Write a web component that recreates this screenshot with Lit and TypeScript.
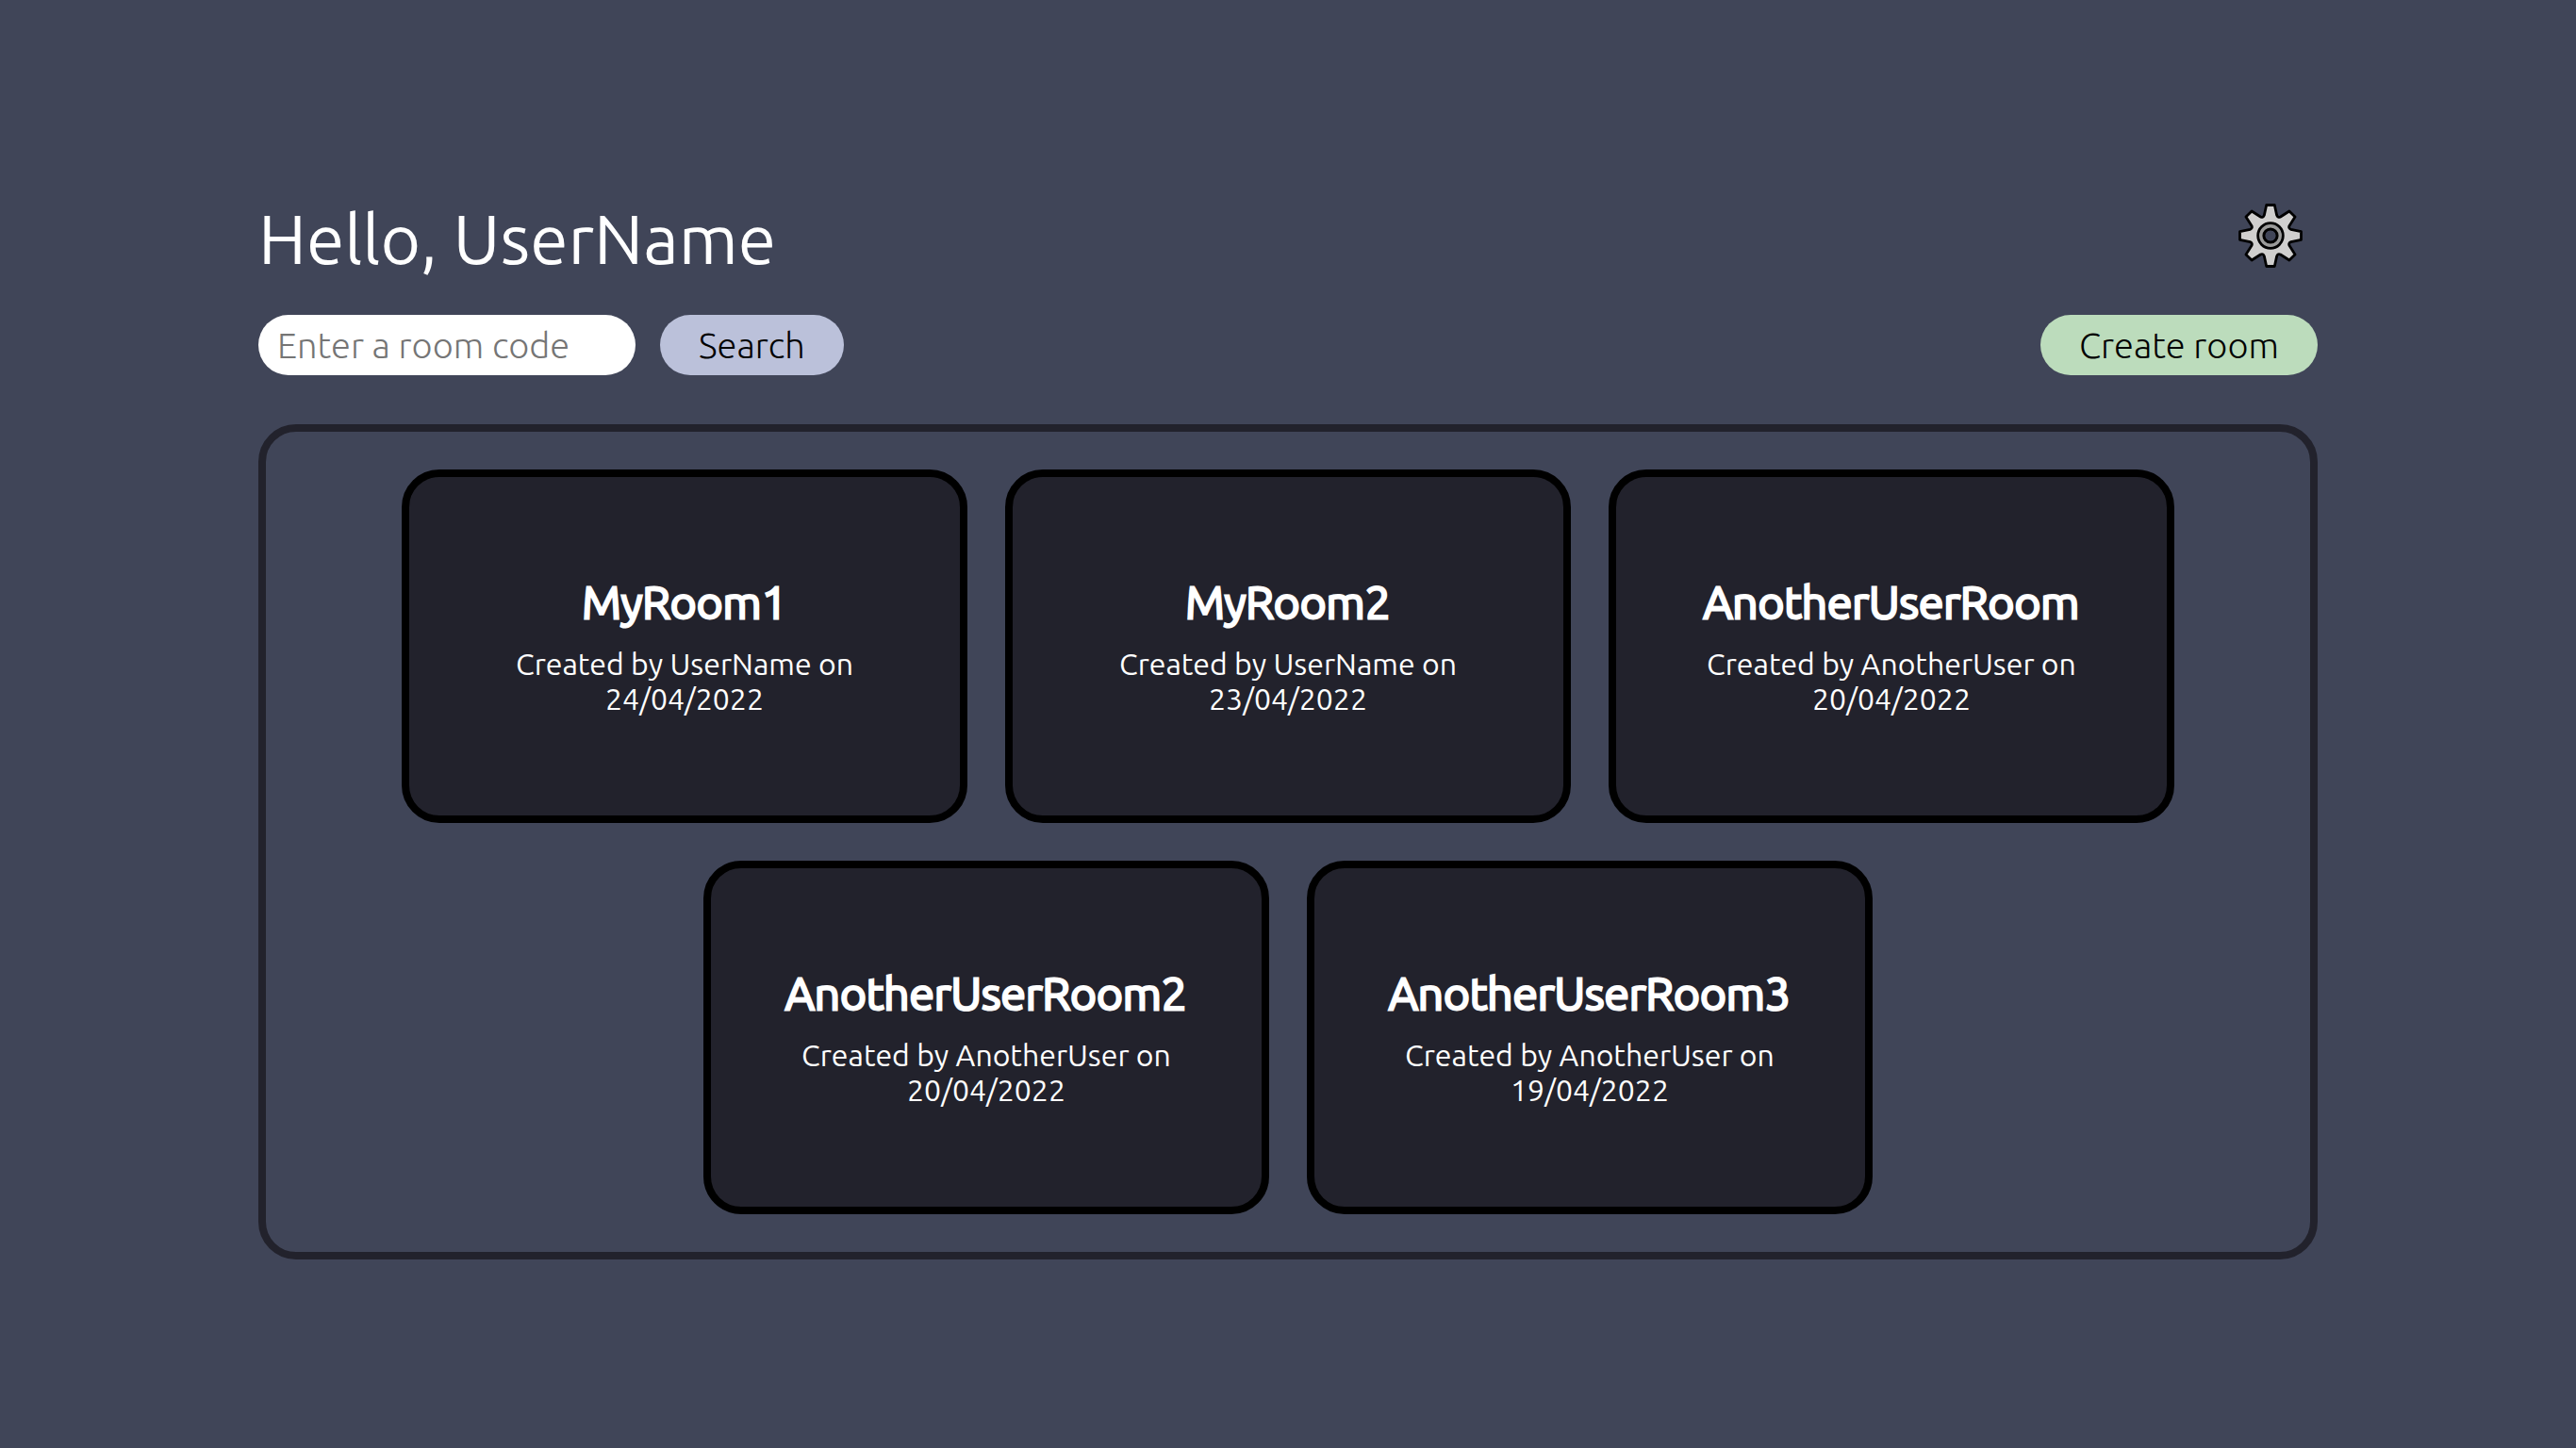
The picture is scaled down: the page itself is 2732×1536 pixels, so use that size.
import { LitElement, html, css, svg } from "lit";
import { customElement, property, state } from "lit/decorators.js";

interface Room {
  name: string;
  owner: string;
  date: string;
}

/** Outline of an eight-toothed gear centred on (36, 36) in a 72-unit box. */
function gearOutline(): string {
  const place = (x: number, y: number, turn: number) => {
    const a = (turn * Math.PI) / 180;
    const px = 36 + x * Math.cos(a) - y * Math.sin(a);
    const py = 36 + x * Math.sin(a) + y * Math.cos(a);
    return `${px.toFixed(2)} ${py.toFixed(2)}`;
  };
  let d = "";
  for (let i = 0; i < 8; i++) {
    const t = i * 45;
    d += i === 0 ? `M${place(-4.8, -15.6, t)}` : "";
    d += `L${place(-3.1, -23.4, t)}L${place(3.1, -23.4, t)}L${place(4.8, -15.6, t)}`;
    d += `Q${place(0, -14.6, t + 22.5)} ${place(-4.8, -15.6, t + 45)}`;
  }
  return d + "Z";
}

@customElement("gear-icon")
export class GearIcon extends LitElement {
  static styles = css`
    :host {
      display: block;
    }
    .gear {
      display: block;
      width: 100%;
      height: 100%;
    }
  `;

  render() {
    return svg`
      <svg class="gear" viewBox="0 0 72 72" aria-hidden="true" stroke-width="2" stroke-linejoin="round">
        <path d="${gearOutline()}M41.2 36A5.2 5.2 0 1 0 30.8 36A5.2 5.2 0 1 0 41.2 36Z"
          fill="#d0cfce" fill-rule="evenodd" stroke="#000" />
        <circle cx="36" cy="36" r="7.4" fill="none" stroke="#9b9b9a" stroke-width="4.4" />
        <circle cx="36" cy="36" r="9.6" fill="none" stroke="#000" />
        <circle cx="36" cy="36" r="5.2" fill="none" stroke="#000" />
      </svg>`;
  }
}

@customElement("room-card")
export class RoomCard extends LitElement {
  @property({ attribute: false }) room!: Room;

  static styles = css`
    :host {
      display: block;
      width: 600px;
      max-width: 100%;
    }
    .card {
      box-sizing: border-box;
      display: flex;
      flex-direction: column;
      align-items: center;
      justify-content: center;
      gap: 20px;
      width: 100%;
      aspect-ratio: 8 / 5;
      padding: 16px 60px;
      border: 8px solid #000;
      border-radius: 40px;
      background: #22222c;
      color: #fff;
      text-align: center;
      text-decoration: none;
    }
    .name {
      margin: 0;
      font-size: 48px;
      font-weight: 300;
      line-height: 55px;
      -webkit-text-stroke: 3px currentColor;
    }
    .details {
      margin: 0;
      font-size: 32px;
      font-weight: 400;
      line-height: 37px;
    }
  `;

  render() {
    const { name, owner, date } = this.room;
    return html`
      <a class="card" href="#${name}">
        <h2 class="name">${name}</h2>
        <p class="details">Created by ${owner} on ${date}</p>
      </a>
    `;
  }
}

@customElement("app-root")
export class AppRoot extends LitElement {
  @state() private user = "UserName";

  @state() private rooms: Room[] = [
    { name: "MyRoom1", owner: "UserName", date: "24/04/2022" },
    { name: "MyRoom2", owner: "UserName", date: "23/04/2022" },
    { name: "AnotherUserRoom", owner: "AnotherUser", date: "20/04/2022" },
    { name: "AnotherUserRoom2", owner: "AnotherUser", date: "20/04/2022" },
    { name: "AnotherUserRoom3", owner: "AnotherUser", date: "19/04/2022" },
  ];

  static styles = css`
    :host {
      display: block;
      font-family: Ubuntu, "Open Sans", "Noto Sans", sans-serif;
      font-weight: 300;
      color: #fff;
    }
    .page {
      box-sizing: border-box;
      display: flex;
      flex-direction: column;
      justify-content: center;
      min-height: 100vh;
      padding: 40px 274px;
      background: #404558;
    }
    .header {
      display: flex;
      align-items: center;
      justify-content: space-between;
      margin-bottom: 34px;
    }
    .greeting {
      margin: 0;
      padding-top: 6px;
      font-size: 73px;
      font-weight: 400;
      line-height: 84px;
    }
    .settings {
      width: 100px;
      height: 100px;
      padding: 0;
      border: 0;
      background: none;
      cursor: pointer;
    }
    .toolbar {
      display: flex;
      flex-wrap: wrap;
      justify-content: space-between;
      gap: 26px;
      margin-bottom: 52px;
    }
    .search {
      display: flex;
      gap: 26px;
    }
    .field,
    .button {
      box-sizing: border-box;
      height: 64px;
      border: 0;
      border-radius: 32px;
      font: inherit;
      font-size: 38px;
      line-height: 44px;
      color: #000;
    }
    .field {
      width: 400px;
      padding: 0 20px;
      background: #fff;
    }
    .field::placeholder {
      color: #757575;
      opacity: 1;
    }
    .button {
      padding: 0 41px;
      cursor: pointer;
    }
    .find {
      background: #bbc1da;
    }
    .create {
      background: #bcdcbc;
    }
    .rooms {
      display: flex;
      flex-wrap: wrap;
      justify-content: center;
      gap: 40px;
      padding: 40px;
      border: 8px solid #22222c;
      border-radius: 40px;
    }
  `;

  render() {
    return html`
      <main class="page">
        <header class="header">
          <h1 class="greeting">Hello, ${this.user}</h1>
          <button class="settings" type="button" aria-label="Settings">
            <gear-icon></gear-icon>
          </button>
        </header>
        <div class="toolbar">
          <form class="search" @submit=${(e: Event) => e.preventDefault()}>
            <input class="field" type="text" placeholder="Enter a room code" aria-label="Room code" />
            <button class="button find" type="submit">Search</button>
          </form>
          <button class="button create" type="button">Create room</button>
        </div>
        <section class="rooms" aria-label="Rooms">
          ${this.rooms.map((room) => html`<room-card .room=${room}></room-card>`)}
        </section>
      </main>
    `;
  }
}
